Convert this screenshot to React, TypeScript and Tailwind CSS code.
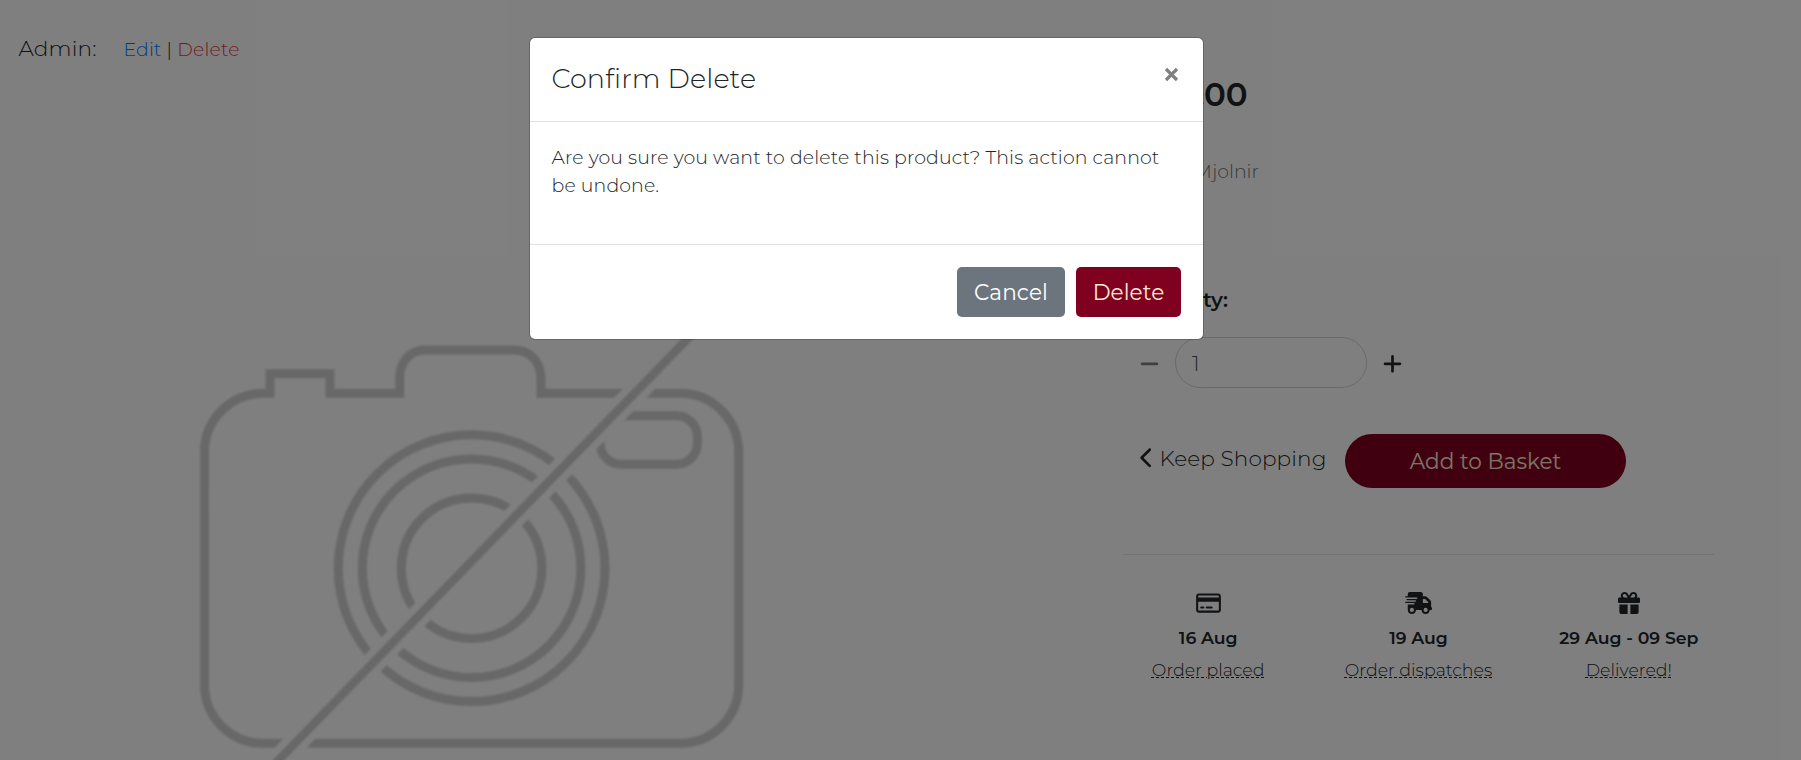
import React from "react";
import type { ReactNode } from "react";
import { FaChevronLeft, FaGift, FaMinus, FaPlus, FaRegCreditCard, FaTruckFast } from "react-icons/fa6";

function NoImage() {
  return (
    <svg className="block h-[480px] w-[600px] blur-[0.8px]" viewBox="170 300 600 480" fill="none" stroke="#d0d0d0" strokeWidth="9">
      <path d="M262.5 393.3H270V373.7H330V393.3H399.7V378C399.7 362 410 350 425 350H514C530 350 540.9 362 540.9 378V393.3H680A58.7 58.7 0 0 1 738.7 452V685A58.5 58.5 0 0 1 680 743.3H263A58.5 58.5 0 0 1 204.5 685V452A58.7 58.7 0 0 1 263.2 393.3" />
      <rect x="600" y="415.7" width="97.4" height="48.6" rx="21" />
      <circle cx="471.6" cy="568.2" r="133.4" />
      <circle cx="471.6" cy="568.2" r="109.3" />
      <circle cx="471.6" cy="568.2" r="70.3" />
      <path d="M239.9 800L754.7 269.5" stroke="#fff" strokeWidth="23" />
      <path d="M239.9 800L754.7 269.5" strokeWidth="8.5" />
    </svg>
  );
}

function Step({ icon, date, label }: { icon: ReactNode; date: string; label: string }) {
  return (
    <div className="flex flex-col items-center">
      <div className="flex h-[22px] items-center">{icon}</div>
      <div className="mt-3 text-[17.3px] leading-6 font-semibold">{date}</div>
      <div className="mt-2 text-[17.4px] leading-6 underline decoration-dashed decoration-1 underline-offset-1">{label}</div>
    </div>
  );
}

function ProductPage() {
  return (
    <div className="flex h-full text-[#212529]">
      <section className="w-[1103px] shrink-0">
        <div className="flex h-[300px] items-baseline pt-[33px] pl-[18.5px]">
          <span className="w-[105px] text-[21.6px] leading-[30px] tracking-[0.2px]">Admin:</span>
          <span className="text-[18.9px] tracking-[0.15px] whitespace-pre">
            <a className="text-[#007bff]">Edit</a> | <a className="text-[#dc3545]">Delete</a>
          </span>
        </div>
        <div className="pl-[170px]">
          <NoImage />
        </div>
      </section>

      <section className="w-[631px] shrink-0 pt-[75px]">
        <div className="px-[37px]">
          <p className="w-[107.5px] text-right text-[32.4px] leading-10 font-semibold">.00</p>
          <p className="mt-[43px] w-[119px] text-right text-[18.9px] leading-7 text-[#6c757d]">Mjolnir</p>
          <p className="mt-[99px] -ml-[22px] w-[110px] text-right text-[20.5px] leading-[30px] font-semibold">Quantity:</p>
          <div className="mt-[22px] flex h-[51px] items-center">
            <FaMinus className="mt-[2px] h-[21.6px] w-[19px] text-[#7d7f82]" />
            <div className="ml-4 flex h-[51px] w-48 items-center rounded-full border border-[#ced4da] px-4 pt-[2px] text-[21.6px] text-[#495057]">1</div>
            <FaPlus className="mt-[2px] ml-4 h-[21.6px] w-[19px]" />
          </div>
          <div className="mt-[45px] flex h-[56px] items-start">
            <FaChevronLeft className="mt-[14px] -ml-px h-[21.6px] w-[16px]" />
            <span className="mt-[10px] ml-[4.5px] w-[185.5px] text-[21.6px] leading-[30px] tracking-[0.1px]">Keep Shopping</span>
            <button className="mt-px h-[54px] w-[281px] rounded-full bg-[#80001f] text-[21.6px] font-normal text-[#faebd7]">Add to Basket</button>
          </div>
        </div>
        <div className="mx-5 mt-[65px] h-px bg-[#e6e6e6]" />
        <div className="mt-[37px] grid grid-cols-3">
          <Step icon={<FaRegCreditCard className="h-[22px] w-[25px]" />} date="16 Aug" label="Order placed" />
          <Step icon={<FaTruckFast className="h-[22px] w-[27.5px]" />} date="19 Aug" label="Order dispatches" />
          <Step icon={<FaGift className="size-[22px]" />} date="29 Aug - 09 Sep" label="Delivered!" />
        </div>
      </section>
    </div>
  );
}

function ConfirmDialog() {
  return (
    <div role="dialog" className="w-[675px] rounded-[6px] border border-black/20 bg-white bg-clip-padding text-[#212529]">
      <div className="flex h-[84px] items-start justify-between border-b border-[#dee2e6] pr-6 pl-[21.5px]">
        <h5 className="mt-[21px] text-[27px] leading-[40px] tracking-[0.1px]">Confirm Delete</h5>
        <button aria-label="Close" className="mt-[29px] block">
          <svg className="block size-[15px]" viewBox="0 0 15 15" stroke="#808080" strokeWidth="3.2">
            <path d="M2 2L13 13M13 2L2 13" />
          </svg>
        </button>
      </div>
      <div className="h-[123px] border-b border-[#dee2e6] px-[21.5px] pt-[22px]">
        <p className="text-[18.9px] leading-7 tracking-[0.13px]">Are you sure you want to delete this product? This action cannot be undone.</p>
      </div>
      <div className="flex h-[94px] justify-end gap-[11px] px-[22px] pt-[22px] text-[21.6px] font-normal tracking-[0.1px]">
        <button className="h-[50px] w-[108px] rounded-[5px] bg-[#6c757d] text-white">Cancel</button>
        <button className="h-[50px] w-[105px] rounded-[5px] bg-[#80001f] text-[#faebd7]">Delete</button>
      </div>
    </div>
  );
}

export default function App() {
  return (
    <div className="relative h-[760px] w-full overflow-hidden bg-white font-['Montserrat','Inter',sans-serif] font-light">
      <ProductPage />
      <div className="absolute inset-0 flex items-start justify-center bg-black/50 pt-[37px] pr-[68px]">
        <ConfirmDialog />
      </div>
    </div>
  );
}
